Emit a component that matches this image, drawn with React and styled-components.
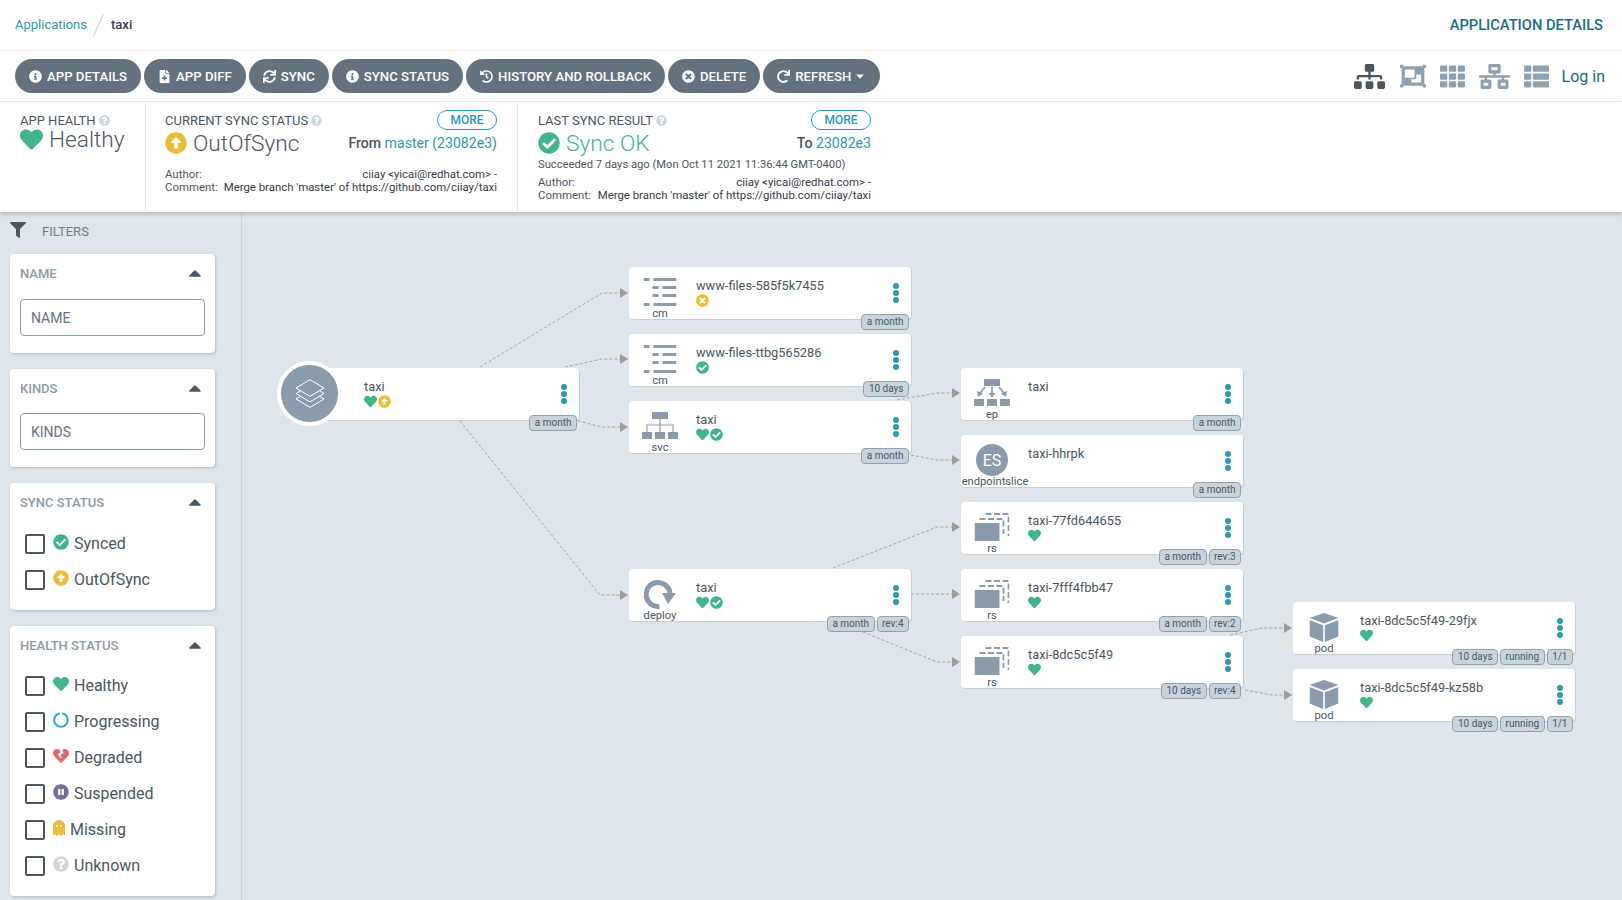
import React from 'react'
import styled, { createGlobalStyle } from 'styled-components'
import {
  FaInfoCircle,
  FaFileMedical,
  FaSync,
  FaHistory,
  FaTimesCircle,
  FaRedo,
  FaCaretDown,
  FaCaretUp,
  FaHeart,
  FaHeartBroken,
  FaArrowAltCircleUp,
  FaCheckCircle,
  FaQuestionCircle,
  FaFilter,
  FaSitemap,
  FaObjectGroup,
  FaTh,
  FaNetworkWired,
  FaThList,
  FaCircleNotch,
  FaPauseCircle,
  FaGhost,
} from 'react-icons/fa'

const GREEN = '#41b68a'
const YELLOW = '#eebb35'
const TEAL = '#2e97b3'
const ICON_GRAY = '#8a9bab'

const GlobalStyle = createGlobalStyle`
  html, body {
    margin: 0;
    height: 100%;
    overflow: hidden;
    background: #dee6eb;
  }
  body, input {
    font-family: Roboto, "Liberation Sans", sans-serif;
  }
  * {
    box-sizing: border-box;
  }
`

const Page = styled.div`
  width: 1622px;
  height: 900px;
  display: flex;
  flex-direction: column;
  overflow: hidden;
`
const TopBar = styled.div`
  height: 51px;
  flex: none;
  background: #fff;
  border-bottom: 1px solid #e9edf0;
  display: flex;
  align-items: center;
  justify-content: space-between;
  padding: 0 19px 1px 15px;
`
const Breadcrumbs = styled.div`
  display: flex;
  align-items: center;
  font-size: 13px;
`
const Crumb = styled.a`
  color: ${TEAL};
`
const Slash = styled.span`
  width: 1px;
  height: 24px;
  margin: 0 12px 0 11px;
  background: #ccd6dd;
  transform: rotate(24deg);
`
const Current = styled.span`
  color: #363c4a;
  font-weight: 500;
`
const PageTitle = styled.div`
  color: #1c6a88;
  font-size: 14.7px;
  font-weight: 500;
`
const ToolBar = styled.div`
  height: 51px;
  flex: none;
  background: #fff;
  border-bottom: 1px solid #e9edf0;
  display: flex;
  align-items: center;
  justify-content: space-between;
  padding: 0 17px 0 15px;
`
const Buttons = styled.div`
  display: flex;
  gap: 3px;
`
const ActionButton = styled.button`
  height: 34px;
  border: 0;
  border-radius: 17px;
  padding: 0 14px;
  display: flex;
  align-items: center;
  gap: 5px;
  background: #64727f;
  color: #fff;
  font-family: inherit;
  font-size: 13.2px;
  font-weight: 500;
`
const CaretDown = styled(FaCaretDown)`
  margin-left: -2px;
`
const Views = styled.div`
  display: flex;
  align-items: center;
`
const ViewIcon = styled.span`
  display: flex;
  margin-right: ${(p) => p.$gap}px;
  color: ${(p) => (p.$active ? '#495763' : '#8fa1b0')};
`
const LogIn = styled.a`
  margin-left: -1px;
  color: #1c6a88;
  font-size: 16px;
`
const StatusPanel = styled.div`
  height: 110px;
  flex: none;
  background: #fff;
  display: flex;
  padding: 3px 0 2px;
  box-shadow: 0 2px 4px rgba(80, 100, 120, 0.35);
  position: relative;
  z-index: 2;
`
const HealthItem = styled.div`
  width: 146px;
  flex: none;
  padding: 7px 0 0 20px;
  border-right: 1px solid #dee6eb;
  color: #495763;
`
const SyncItem = styled.div`
  width: ${(p) => p.$width}px;
  flex: none;
  padding: 0 ${(p) => (p.$last ? 21 : 20)}px 0 ${(p) => (p.$last ? 20 : 19)}px;
  border-right: ${(p) => (p.$last ? '0' : '1px solid #dee6eb')};
  color: #495763;
`
const ItemHead = styled.div`
  display: flex;
  align-items: center;
  justify-content: space-between;
  height: 21px;
  margin-top: 4px;
`
const Label = styled.div`
  display: flex;
  align-items: center;
  gap: 3px;
  padding-top: 1px;
  font-size: 13px;
  color: #495763;
`
const MoreButton = styled.button`
  width: 60px;
  height: 20px;
  padding: 0;
  background: #fff;
  border: 1px solid ${TEAL};
  border-radius: 10px;
  color: ${TEAL};
  font-family: inherit;
  font-size: 12px;
  font-weight: 500;
`
const ItemMain = styled.div`
  display: flex;
  align-items: center;
  justify-content: space-between;
  height: 32px;
  margin-top: -3px;
`
const BigStatus = styled.div`
  display: flex;
  align-items: center;
  gap: 6px;
  font-size: 22.7px;
  font-weight: 300;
  color: ${(p) => p.$color || '#495763'};
`
const HealthStatus = styled(BigStatus)`
  margin-top: -2px;
`
const Revision = styled.div`
  font-size: 14.1px;
  font-weight: 500;
  color: #495763;
`
const RevisionLink = styled.a`
  color: ${TEAL};
  font-weight: 400;
`
const Succeeded = styled.div`
  font-size: 11.2px;
  line-height: 16px;
  margin-top: -2px;
  color: #495763;
`
const Meta = styled.div`
  margin-top: ${(p) => p.$top}px;
  font-size: 11.4px;
  line-height: 13px;
`
const MetaRow = styled.div`
  display: flex;
  justify-content: space-between;
  white-space: nowrap;
  color: #495763;
`
const MetaValue = styled.span`
  color: #363c4a;
`
const Body = styled.div`
  flex: 1;
  display: flex;
  min-height: 0;
`
const Sidebar = styled.div`
  width: 242px;
  flex: none;
  padding: 0 26px 0 10px;
  border-right: 1px solid #ccd6dd;
  background: #dee6eb;
`
const FilterHead = styled.div`
  height: 42px;
  display: flex;
  align-items: center;
  gap: 16px;
  padding-bottom: 3px;
  color: #6d7f8b;
  font-size: 13px;
`
const FilterIcon = styled(FaFilter)`
  color: #495763;
  margin-top: -3px;
`
const Panel = styled.div`
  background: #fff;
  border-radius: 4px;
  margin-bottom: 16px;
  padding: 0 10px ${(p) => p.$bottom}px;
  box-shadow: 1px 1px 3px rgba(140, 155, 170, 0.6);
`
const PanelHead = styled.div`
  height: 38px;
  display: flex;
  align-items: center;
  justify-content: space-between;
  color: ${ICON_GRAY};
  font-size: 13px;
  font-weight: 500;
`
const Caret = styled(FaCaretUp)`
  color: #495763;
  font-size: 20px;
`
const FilterInput = styled.input`
  display: block;
  width: 100%;
  height: 37px;
  margin-top: ${(p) => p.$top}px;
  padding: 0 10px;
  border: 1px solid ${ICON_GRAY};
  border-radius: 4px;
  font-size: 14px;
  outline: none;
  &::placeholder {
    color: #64727f;
    opacity: 1;
  }
`
const Options = styled.div`
  margin-top: ${(p) => p.$top}px;
  padding-left: 5px;
`
const Option = styled.label`
  height: 36px;
  display: flex;
  align-items: center;
  color: #495763;
  font-size: 16px;
`
const Check = styled.input`
  appearance: none;
  width: 20px;
  height: 20px;
  margin: 1px 8px 0 0;
  border: 2px solid #495763;
  border-radius: 2px;
  background: #fff;
`
const OptionIcon = styled.span`
  display: flex;
  margin-right: 5px;
  margin-top: -2px;
  color: ${(p) => p.$color};
`
const Canvas = styled.div`
  flex: 1;
  position: relative;
  background: #dee6eb;
`
const Edges = styled.svg`
  position: absolute;
  left: -242px;
  top: -212px;
  width: 1622px;
  height: 900px;
`
const Node = styled.div`
  position: absolute;
  left: ${(p) => p.$x - 242}px;
  top: ${(p) => p.$y - 212}px;
  width: ${(p) => p.$w}px;
  height: 52px;
  background: #fff;
  border-radius: 4px;
  box-shadow: 1px 1px 1px #c3ced8;
`
const KindIcon = styled.div`
  position: absolute;
  left: 31px;
  top: 11px;
  transform: translateX(-50%);
  display: flex;
`
const KindLabel = styled.div`
  position: absolute;
  left: ${(p) => p.$left}px;
  top: 40px;
  transform: translateX(-50%);
  font-size: 11.2px;
  line-height: 14px;
  color: #495763;
  white-space: nowrap;
`
const NodeText = styled.div`
  margin-left: ${(p) => p.$left}px;
  padding-top: 11px;
`
const NodeName = styled.div`
  font-size: 12.8px;
  line-height: 16px;
  color: #495763;
`
const NodeStatus = styled.div`
  display: flex;
  align-items: center;
  gap: 1px;
  height: 14px;
  margin-top: -1px;
`
const Dots = styled.div`
  position: absolute;
  right: 12px;
  top: 16px;
  display: flex;
  flex-direction: column;
  gap: 1px;
`
const Dot = styled.span`
  width: 6px;
  height: 6px;
  border-radius: 50%;
  background: ${TEAL};
`
const Tags = styled.div`
  position: absolute;
  right: 2px;
  top: 47px;
  display: flex;
  gap: 2px;
`
const Tag = styled.span`
  height: 16px;
  padding: 0 4.5px;
  border: 1px solid #8fa4b1;
  border-radius: 4px;
  background: #c8d3dc;
  color: #495763;
  font-size: 10px;
  line-height: 14px;
`
const RootRing = styled.div`
  position: absolute;
  left: -33px;
  top: -7px;
  width: 65px;
  height: 65px;
  border: 4px solid #fff;
  border-radius: 50%;
  background: ${ICON_GRAY};
  display: flex;
  align-items: center;
  justify-content: center;
`
const EsBadge = styled.div`
  width: 32px;
  height: 32px;
  margin-top: -2px;
  border-radius: 50%;
  background: ${ICON_GRAY};
  color: #fff;
  font-size: 16px;
  display: flex;
  align-items: center;
  justify-content: center;
`

const CmIcon = () => (
  <svg width='33' height='28' viewBox='0 0 33 28' fill={ICON_GRAY}>
    <rect x='0' y='0' width='6' height='3' />
    <rect x='10' y='0' width='23' height='3' />
    <rect x='9' y='8' width='6' height='3' />
    <rect x='19' y='8' width='14' height='3' />
    <rect x='9' y='16' width='6' height='3' />
    <rect x='19' y='16' width='14' height='3' />
    <rect x='0' y='25' width='6' height='3' />
    <rect x='10' y='25' width='23' height='3' />
  </svg>
)

const SvcIcon = () => (
  <svg width='36' height='27' viewBox='0 0 36 27' fill={ICON_GRAY}>
    <rect x='10' y='0' width='16' height='7' />
    <rect x='0' y='20' width='10' height='7' />
    <rect x='13' y='20' width='10' height='7' />
    <rect x='26' y='20' width='10' height='7' />
    <path d='M18 7v13M5 20v-7h26v7' fill='none' stroke={ICON_GRAY} strokeWidth='1.2' />
  </svg>
)

const EpIcon = () => (
  <svg width='36' height='27' viewBox='0 0 36 27' fill={ICON_GRAY}>
    <rect x='10' y='0' width='16' height='7' />
    <rect x='0' y='20' width='10' height='7' />
    <rect x='13' y='20' width='10' height='7' />
    <rect x='26' y='20' width='10' height='7' />
    <path d='M18 8v7M11 8l-5 6M25 8l5 6' fill='none' stroke={ICON_GRAY} strokeWidth='1.6' />
    <path d='M14.5 14h7L18 18.5zM3 12l6 2.5-5 3.5zM33 12l-6 2.5 5 3.5z' />
  </svg>
)

const RsIcon = () => (
  <svg width='35' height='28' viewBox='0 0 35 28' fill='none'>
    <path d='M11 1h23v22' stroke={ICON_GRAY} strokeWidth='1.8' strokeDasharray='6 2.5' />
    <path d='M5 6h24v15' stroke={ICON_GRAY} strokeWidth='1.8' strokeDasharray='6 2.5' />
    <rect x='0' y='10' width='25' height='18' fill={ICON_GRAY} />
  </svg>
)

const PodIcon = () => (
  <svg width='29' height='29' viewBox='0 0 29 29' fill={ICON_GRAY}>
    <path d='M14.5 0L29 5l-14.5 5.5L0 5z' />
    <path d='M0 7l13.7 5.2V29L0 23.5z' />
    <path d='M29 7l-13.7 5.2V29L29 23.5z' />
  </svg>
)

const DeployIcon = () => (
  <svg width='32' height='29' viewBox='0 0 32 29' fill={ICON_GRAY}>
    <path d='M15.5 26.4A12 12 0 1 1 26 13' fill='none' stroke={ICON_GRAY} strokeWidth='5' />
    <path d='M18 13h14l-8 11z' />
  </svg>
)

const LayersIcon = () => (
  <svg width='30' height='30' viewBox='0 0 30 30' fill='none' stroke='#fff' strokeWidth='1'>
    <path d='M15 .7L29 9l-14 8.4L1 9z' />
    <path d='M5.5 11.8L1 14.5l14 8.4 14-8.4-4.5-2.7' />
    <path d='M5.5 17.3L1 20l14 8.4L29 20l-4.5-2.7' />
  </svg>
)

const EDGES = [
  { d: 'M480 367L602 293H620', tip: [620, 293] },
  { d: 'M565 367L602 359H620', tip: [620, 359] },
  { d: 'M578 421L602 427H620', tip: [620, 427] },
  { d: 'M460 421L600 595H620', tip: [620, 595] },
  { d: 'M897 400L937 393H952', tip: [952, 393] },
  { d: 'M911 455L937 460H952', tip: [952, 460] },
  { d: 'M833 568L937 527H952', tip: [952, 527] },
  { d: 'M911 594H952', tip: [952, 594] },
  { d: 'M863 632L937 662H952', tip: [952, 662] },
  { d: 'M1230 635L1262 628H1284', tip: [1284, 628] },
  { d: 'M1245 690L1272 695H1284', tip: [1284, 695] },
]

const HeartIcon = () => <FaHeart size={13} color={GREEN} />
const SyncedIcon = () => <FaCheckCircle size={13} color={GREEN} />
const OutOfSyncIcon = () => <FaArrowAltCircleUp size={13} color={YELLOW} />
const UnknownSyncIcon = () => <FaTimesCircle size={13} color={YELLOW} />

const NODES = [
  { x: 629, y: 267, kind: 'cm', icon: <CmIcon />, name: 'www-files-585f5k7455', status: [<UnknownSyncIcon key='s' />], tags: ['a month'] },
  { x: 629, y: 334, kind: 'cm', icon: <CmIcon />, name: 'www-files-ttbg565286', status: [<SyncedIcon key='s' />], tags: ['10 days'] },
  { x: 629, y: 401, kind: 'svc', icon: <SvcIcon />, name: 'taxi', status: [<HeartIcon key='h' />, <SyncedIcon key='s' />], tags: ['a month'] },
  { x: 629, y: 569, kind: 'deploy', icon: <DeployIcon />, name: 'taxi', status: [<HeartIcon key='h' />, <SyncedIcon key='s' />], tags: ['a month', 'rev:4'] },
  { x: 961, y: 368, kind: 'ep', icon: <EpIcon />, name: 'taxi', status: [], tags: ['a month'] },
  { x: 961, y: 435, kind: 'endpointslice', labelLeft: 34, icon: <EsBadge>ES</EsBadge>, name: 'taxi-hhrpk', status: [], tags: ['a month'] },
  { x: 961, y: 502, kind: 'rs', icon: <RsIcon />, name: 'taxi-77fd644655', status: [<HeartIcon key='h' />], tags: ['a month', 'rev:3'] },
  { x: 961, y: 569, kind: 'rs', icon: <RsIcon />, name: 'taxi-7fff4fbb47', status: [<HeartIcon key='h' />], tags: ['a month', 'rev:2'] },
  { x: 961, y: 636, kind: 'rs', icon: <RsIcon />, name: 'taxi-8dc5c5f49', status: [<HeartIcon key='h' />], tags: ['10 days', 'rev:4'] },
  { x: 1293, y: 602, kind: 'pod', icon: <PodIcon />, name: 'taxi-8dc5c5f49-29fjx', status: [<HeartIcon key='h' />], tags: ['10 days', 'running', '1/1'] },
  { x: 1293, y: 669, kind: 'pod', icon: <PodIcon />, name: 'taxi-8dc5c5f49-kz58b', status: [<HeartIcon key='h' />], tags: ['10 days', 'running', '1/1'] },
]

const ACTIONS = [
  { icon: <FaInfoCircle size={13} />, label: 'APP DETAILS' },
  { icon: <FaFileMedical size={13} />, label: 'APP DIFF' },
  { icon: <FaSync size={13} />, label: 'SYNC' },
  { icon: <FaInfoCircle size={13} />, label: 'SYNC STATUS' },
  { icon: <FaHistory size={13} />, label: 'HISTORY AND ROLLBACK' },
  { icon: <FaTimesCircle size={13} />, label: 'DELETE' },
  { icon: <FaRedo size={13} />, label: 'REFRESH', caret: true },
]

const SYNC_OPTIONS = [
  { label: 'Synced', color: GREEN, icon: <FaCheckCircle size={16} /> },
  { label: 'OutOfSync', color: YELLOW, icon: <FaArrowAltCircleUp size={16} /> },
]

const HEALTH_OPTIONS = [
  { label: 'Healthy', color: GREEN, icon: <FaHeart size={16} /> },
  { label: 'Progressing', color: '#2ea7ea', icon: <FaCircleNotch size={16} /> },
  { label: 'Degraded', color: '#e0686a', icon: <FaHeartBroken size={16} /> },
  { label: 'Suspended', color: '#766f94', icon: <FaPauseCircle size={16} /> },
  { label: 'Missing', color: YELLOW, icon: <FaGhost size={12} style={{ height: 16 }} /> },
  { label: 'Unknown', color: '#ccd6dd', icon: <FaQuestionCircle size={16} /> },
]

const Help = () => <FaQuestionCircle size={11} color='#ccd6dd' />

const MetaBlock = ({ top }) => (
  <Meta $top={top}>
    <MetaRow>
      <span>Author:</span>
      <MetaValue>ciiay &lt;yicai@redhat.com&gt; -</MetaValue>
    </MetaRow>
    <MetaRow>
      <span>Comment:</span>
      <MetaValue>Merge branch 'master' of https://github.com/ciiay/taxi</MetaValue>
    </MetaRow>
  </Meta>
)

const FilterPanel = ({ title, placeholder, options, bottom, top }) => (
  <Panel $bottom={bottom}>
    <PanelHead>
      {title}
      <Caret />
    </PanelHead>
    {placeholder && <FilterInput $top={top} placeholder={placeholder} />}
    {options && (
      <Options $top={top}>
        {options.map((option) => (
          <Option key={option.label}>
            <Check type='checkbox' />
            <OptionIcon $color={option.color}>{option.icon}</OptionIcon>
            {option.label}
          </Option>
        ))}
      </Options>
    )}
  </Panel>
)

const NodeDots = () => (
  <Dots>
    <Dot />
    <Dot />
    <Dot />
  </Dots>
)

const NodeTags = ({ tags }) => (
  <Tags>
    {tags.map((tag) => (
      <Tag key={tag}>{tag}</Tag>
    ))}
  </Tags>
)

const App = () => (
  <Page>
    <GlobalStyle />
    <TopBar>
      <Breadcrumbs>
        <Crumb>Applications</Crumb>
        <Slash />
        <Current>taxi</Current>
      </Breadcrumbs>
      <PageTitle>APPLICATION DETAILS</PageTitle>
    </TopBar>
    <ToolBar>
      <Buttons>
        {ACTIONS.map((action) => (
          <ActionButton key={action.label}>
            {action.icon}
            {action.label}
            {action.caret && <CaretDown size={12} />}
          </ActionButton>
        ))}
      </Buttons>
      <Views>
        <ViewIcon $active $gap={15}><FaSitemap size={31} /></ViewIcon>
        <ViewIcon $gap={14}><FaObjectGroup size={26} /></ViewIcon>
        <ViewIcon $gap={14}><FaTh size={25} /></ViewIcon>
        <ViewIcon $gap={14}><FaNetworkWired size={31} /></ViewIcon>
        <ViewIcon $gap={14}><FaThList size={25} /></ViewIcon>
        <LogIn>Log in</LogIn>
      </Views>
    </ToolBar>
    <StatusPanel>
      <HealthItem>
        <Label>APP HEALTH <Help /></Label>
        <HealthStatus>
          <FaHeart size={23} color={GREEN} />
          Healthy
        </HealthStatus>
      </HealthItem>
      <SyncItem $width={372}>
        <ItemHead>
          <Label>CURRENT SYNC STATUS <Help /></Label>
          <MoreButton>MORE</MoreButton>
        </ItemHead>
        <ItemMain>
          <BigStatus>
            <FaArrowAltCircleUp size={22} color={YELLOW} />
            OutOfSync
          </BigStatus>
          <Revision>
            From <RevisionLink>master (23082e3)</RevisionLink>
          </Revision>
        </ItemMain>
        <MetaBlock top={9} />
      </SyncItem>
      <SyncItem $width={374} $last>
        <ItemHead>
          <Label>LAST SYNC RESULT <Help /></Label>
          <MoreButton>MORE</MoreButton>
        </ItemHead>
        <ItemMain>
          <BigStatus $color={GREEN}>
            <FaCheckCircle size={22} color={GREEN} />
            Sync OK
          </BigStatus>
          <Revision>
            To <RevisionLink>23082e3</RevisionLink>
          </Revision>
        </ItemMain>
        <Succeeded>Succeeded 7 days ago (Mon Oct 11 2021 11:36:44 GMT-0400)</Succeeded>
        <MetaBlock top={3} />
      </SyncItem>
    </StatusPanel>
    <Body>
      <Sidebar>
        <FilterHead>
          <FilterIcon size={16} />
          FILTERS
        </FilterHead>
        <FilterPanel title='NAME' placeholder='NAME' top={7} bottom={17} />
        <FilterPanel title='KINDS' placeholder='KINDS' top={6} bottom={17} />
        <FilterPanel title='SYNC STATUS' options={SYNC_OPTIONS} top={4} bottom={13} />
        <FilterPanel title='HEALTH STATUS' options={HEALTH_OPTIONS} top={3} bottom={13} />
      </Sidebar>
      <Canvas>
        <Edges viewBox='0 0 1622 900'>
          {EDGES.map((edge) => (
            <g key={edge.d}>
              <path d={edge.d} fill='none' stroke='#a3a3a3' strokeWidth='1' strokeDasharray='3 2' />
              <polygon
                points={`${edge.tip[0]},${edge.tip[1] - 5} ${edge.tip[0] + 8},${edge.tip[1]} ${edge.tip[0]},${edge.tip[1] + 5}`}
                fill='#9c9c9c'
              />
            </g>
          ))}
        </Edges>
        <Node $x={310} $y={368} $w={269}>
          <RootRing>
            <LayersIcon />
          </RootRing>
          <NodeText $left={54}>
            <NodeName>taxi</NodeName>
            <NodeStatus>
              <HeartIcon />
              <OutOfSyncIcon />
            </NodeStatus>
          </NodeText>
          <NodeDots />
          <NodeTags tags={['a month']} />
        </Node>
        {NODES.map((node) => (
          <Node key={node.name + node.y} $x={node.x} $y={node.y} $w={282}>
            <KindIcon>{node.icon}</KindIcon>
            <KindLabel $left={node.labelLeft || 31}>{node.kind}</KindLabel>
            <NodeText $left={67}>
              <NodeName>{node.name}</NodeName>
              <NodeStatus>{node.status}</NodeStatus>
            </NodeText>
            <NodeDots />
            <NodeTags tags={node.tags} />
          </Node>
        ))}
      </Canvas>
    </Body>
  </Page>
)

export default App
